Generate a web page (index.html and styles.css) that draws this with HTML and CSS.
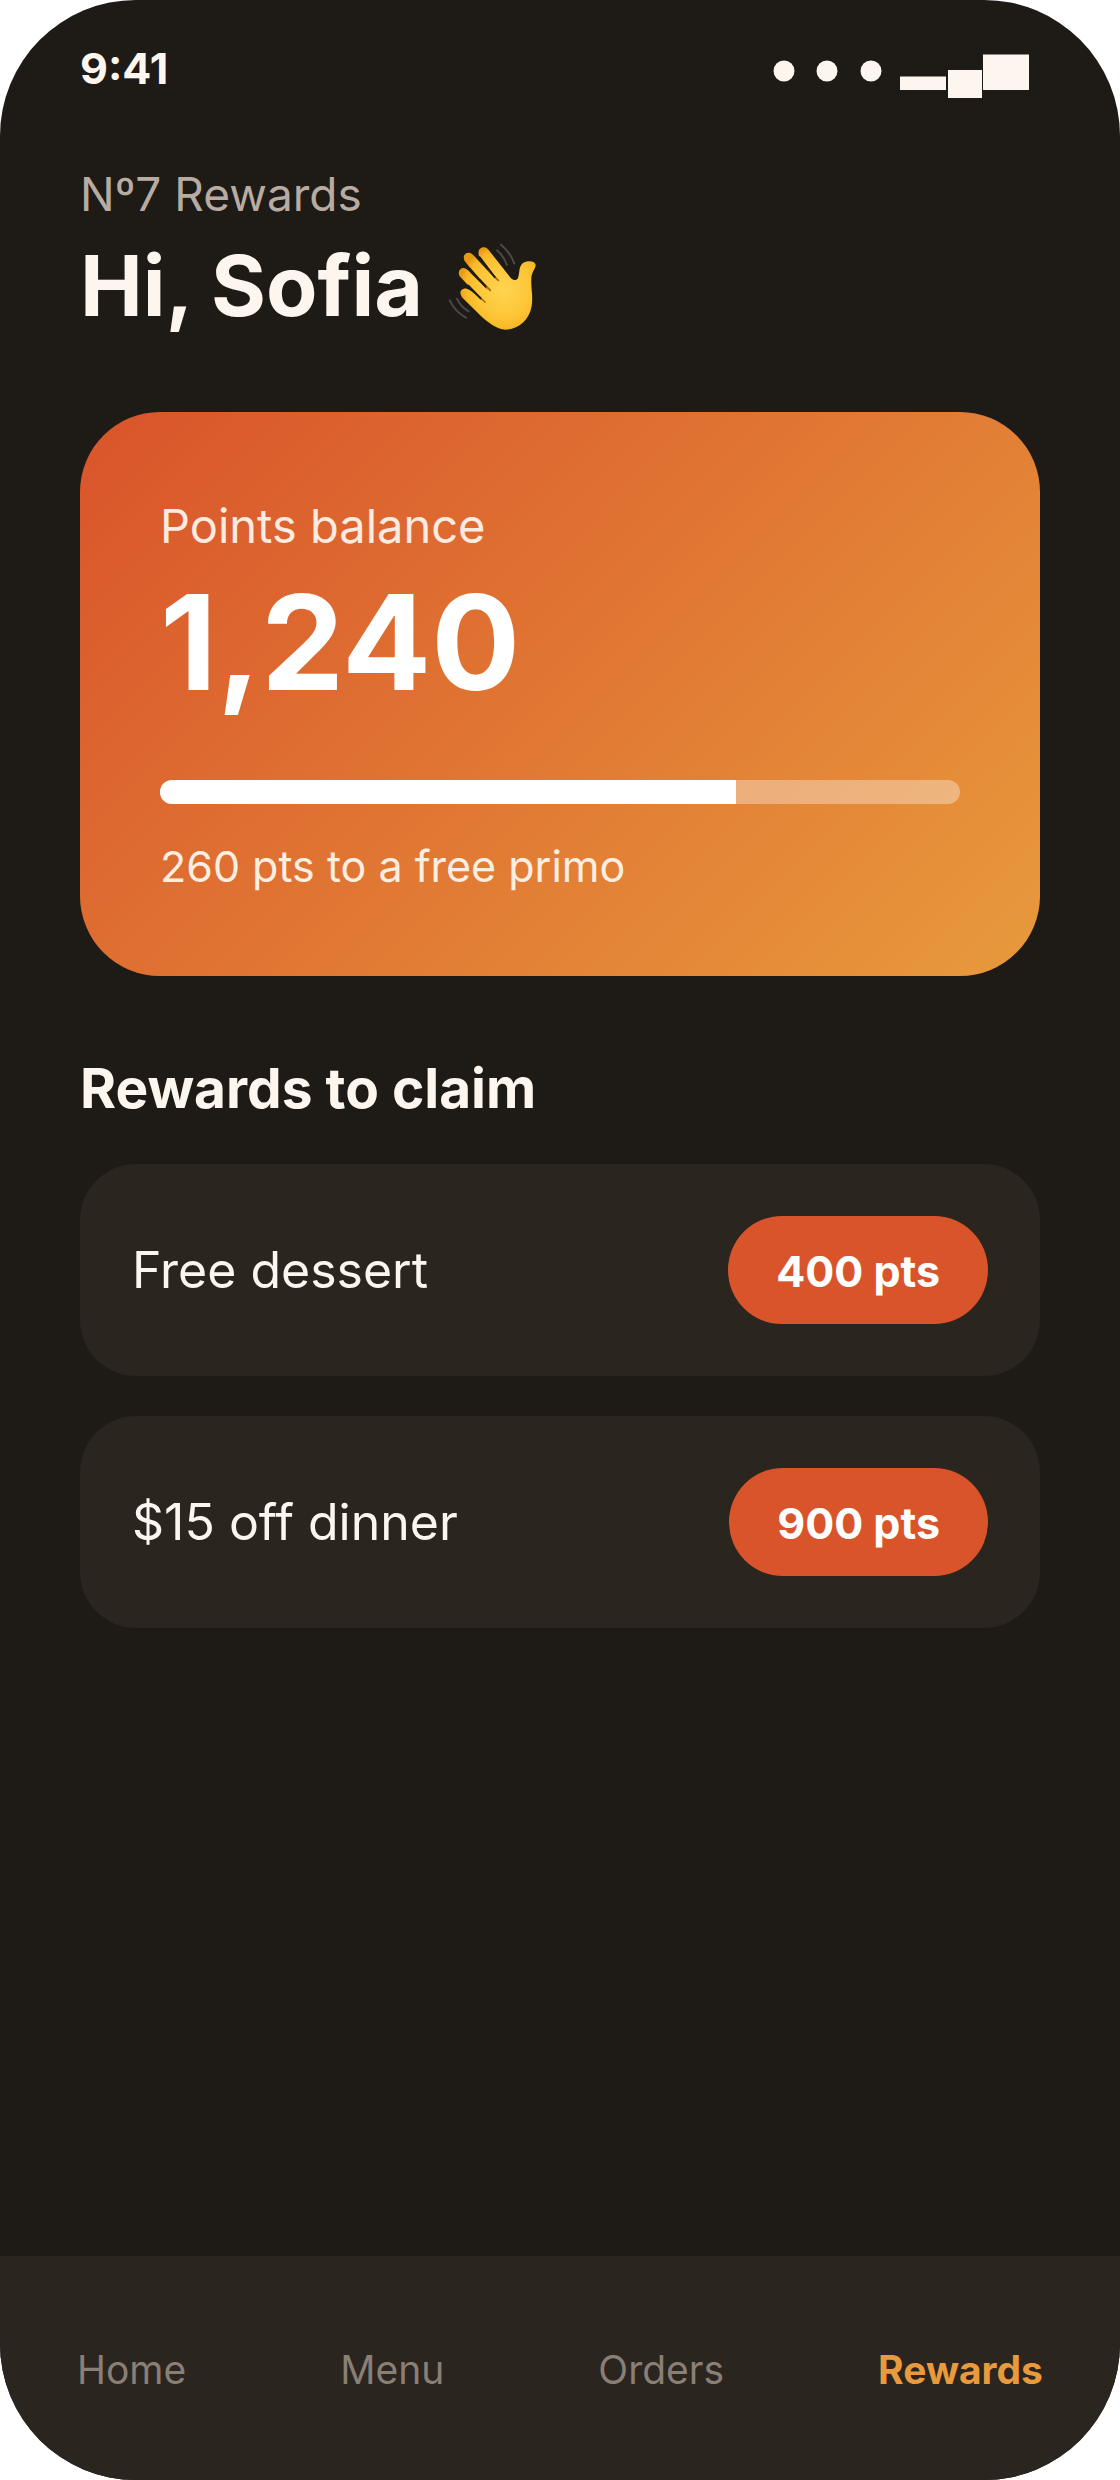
FILE: index.html
```html
<!DOCTYPE html>
<html lang="en">
<head>
<meta charset="utf-8">
<meta name="viewport" content="width=device-width, initial-scale=1">
<title>Nº7 Rewards</title>
<link rel="stylesheet" href="styles.css">
</head>
<body>
<div class="app">
  <header class="status">
    <time class="clock">9:41</time>
    <svg class="signal" viewBox="768 40 272 64" role="img" aria-label="Signal and battery">
      <circle cx="784" cy="71" r="10.5"/>
      <circle cx="827" cy="71" r="10.5"/>
      <circle cx="871" cy="71" r="10.5"/>
      <path d="M900 76.500h46V90h-46zM948 70h34v28h-34zM983 54.500h46V90h-46z"/>
    </svg>
  </header>
  <main class="content">
    <p class="brand">Nº7 Rewards</p>
    <h1 class="greeting">Hi, Sofia
      <svg class="wave" viewBox="75 60 270 270" role="img" aria-label="Waving hand">
        <defs>
          <radialGradient id="skin" gradientUnits="userSpaceOnUse" cx="245" cy="205" r="135">
            <stop offset="0" stop-color="#ffd452"/>
            <stop offset="0.600" stop-color="#fdc637"/>
            <stop offset="0.850" stop-color="#f9b928"/>
            <stop offset="1" stop-color="#e89a14"/>
          </radialGradient>
        </defs>
        <g fill="none" stroke="#4b4848" stroke-width="6" stroke-linecap="round">
          <path d="M237 71Q265 94 277 128M225 88Q247 107 255 132M83 238Q99 272 132 290M105 233Q116 258 140 271"/>
        </g>
        <path fill="url(#skin)" d="M171 104C166 90 174 79 185 79C193 79 199 85 204 92L262 166C269 177 282 182 288 171C294 155 289 137 303 126C315 118 339 119 341 131C342 142 329 152 328 172C326 200 334 225 329 255C322 300 285 326 250 326C222 324 200 305 180 288L122 231C111 218 114 205 126 203C133 201 141 205 151 213L182 239L113 166C107 153 112 143 123 141C132 140 139 148 148 158L198 208L128 120C121 106 128 96 139 95C147 94 153 100 160 109L222 176Z"/>
        <path fill="none" stroke="#a86205" stroke-width="5" stroke-linecap="round" d="M200 149L229 178M174 176L205 208M157 213L189 243"/>
        <path fill="none" stroke="#1e1a16" stroke-width="6" stroke-linecap="round" d="M173 109L218 168M143 143L191 197M139 194L176 232"/>
      </svg>
    </h1>
    <section class="balance">
      <h2 class="balance-label">Points balance</h2>
      <p class="balance-value">1,240</p>
      <div class="track" role="progressbar" aria-label="Progress to a free primo" aria-valuenow="72" aria-valuemin="0" aria-valuemax="100">
        <div class="fill" style="width: 72%"></div>
      </div>
      <p class="balance-note">260 pts to a free primo</p>
    </section>
    <h2 class="section-title">Rewards to claim</h2>
    <ul class="rewards">
      <li class="reward"><span>Free dessert</span><button class="claim" type="button">400 pts</button></li>
      <li class="reward"><span>$15 off dinner</span><button class="claim" type="button">900 pts</button></li>
    </ul>
  </main>
  <nav class="tabs">
    <a class="tab" href="#home">Home</a>
    <a class="tab" href="#menu">Menu</a>
    <a class="tab" href="#orders">Orders</a>
    <a class="tab tab-active" href="#rewards" aria-current="page">Rewards</a>
  </nav>
</div>
</body>
</html>
```
FILE: styles.css
```css
* {
  box-sizing: border-box;
}

body {
  margin: 0;
  background: #ffffff;
  font-family: Inter, "Liberation Sans", sans-serif;
  color: #fdf6ee;
}

h1,
h2,
p,
ul {
  margin: 0;
  padding: 0;
}

.app {
  display: flex;
  flex-direction: column;
  min-height: 100vh;
  border-radius: 136px;
  overflow: hidden;
  background: #1e1a16;
}

.status {
  display: flex;
  justify-content: space-between;
  align-items: flex-start;
  padding: 40px 80px 0;
}

.clock {
  font-size: 43px;
  line-height: 56px;
  font-weight: 700;
}

.signal {
  width: 272px;
  height: 64px;
  fill: #fdf6ee;
}

.content {
  flex: 1;
  padding: 58px 80px;
}

.brand {
  font-size: 46px;
  line-height: 64px;
  color: #b8aca2;
}

.greeting {
  display: flex;
  align-items: center;
  gap: 24px;
  font-size: 84px;
  line-height: 120px;
  font-weight: 700;
}

.wave {
  width: 90px;
  height: 90px;
}

.balance {
  margin-top: 66px;
  padding: 82px 80px 80px;
  border-radius: 80px;
  background: linear-gradient(135deg, #d9542b, #e89a3c);
}

.balance-label {
  font-size: 47px;
  line-height: 64px;
  font-weight: 400;
  color: #fdeae0;
}

.balance-value {
  font-size: 132px;
  line-height: 168px;
  font-weight: 700;
  color: #ffffff;
}

.track {
  height: 24px;
  margin: 54px 0 32px;
  border-radius: 12px;
  overflow: hidden;
  background: rgba(255, 255, 255, 0.35);
}

.fill {
  height: 100%;
  background: #ffffff;
}

.balance-note {
  font-size: 43px;
  line-height: 60px;
  color: #fdeee2;
}

.section-title {
  margin: 72px 0 36px;
  font-size: 55px;
  line-height: 80px;
  font-weight: 700;
}

.rewards {
  display: grid;
  gap: 40px;
  list-style: none;
}

.reward {
  display: flex;
  justify-content: space-between;
  align-items: center;
  padding: 52px;
  border-radius: 56px;
  background: #2a251f;
  font-size: 50px;
  line-height: 72px;
}

.claim {
  padding: 25px 48px 23px;
  border: 0;
  border-radius: 54px;
  background: #d9542b;
  color: #ffffff;
  font-family: inherit;
  font-size: 43px;
  line-height: 60px;
  font-weight: 700;
}

.tabs {
  display: flex;
  justify-content: space-around;
  padding: 86px 0 82px;
  background: #2a251f;
}

.tab {
  font-size: 39px;
  line-height: 56px;
  color: #8a7f76;
  text-decoration: none;
}

.tab-active {
  color: #e89a3c;
  font-weight: 700;
}
```
